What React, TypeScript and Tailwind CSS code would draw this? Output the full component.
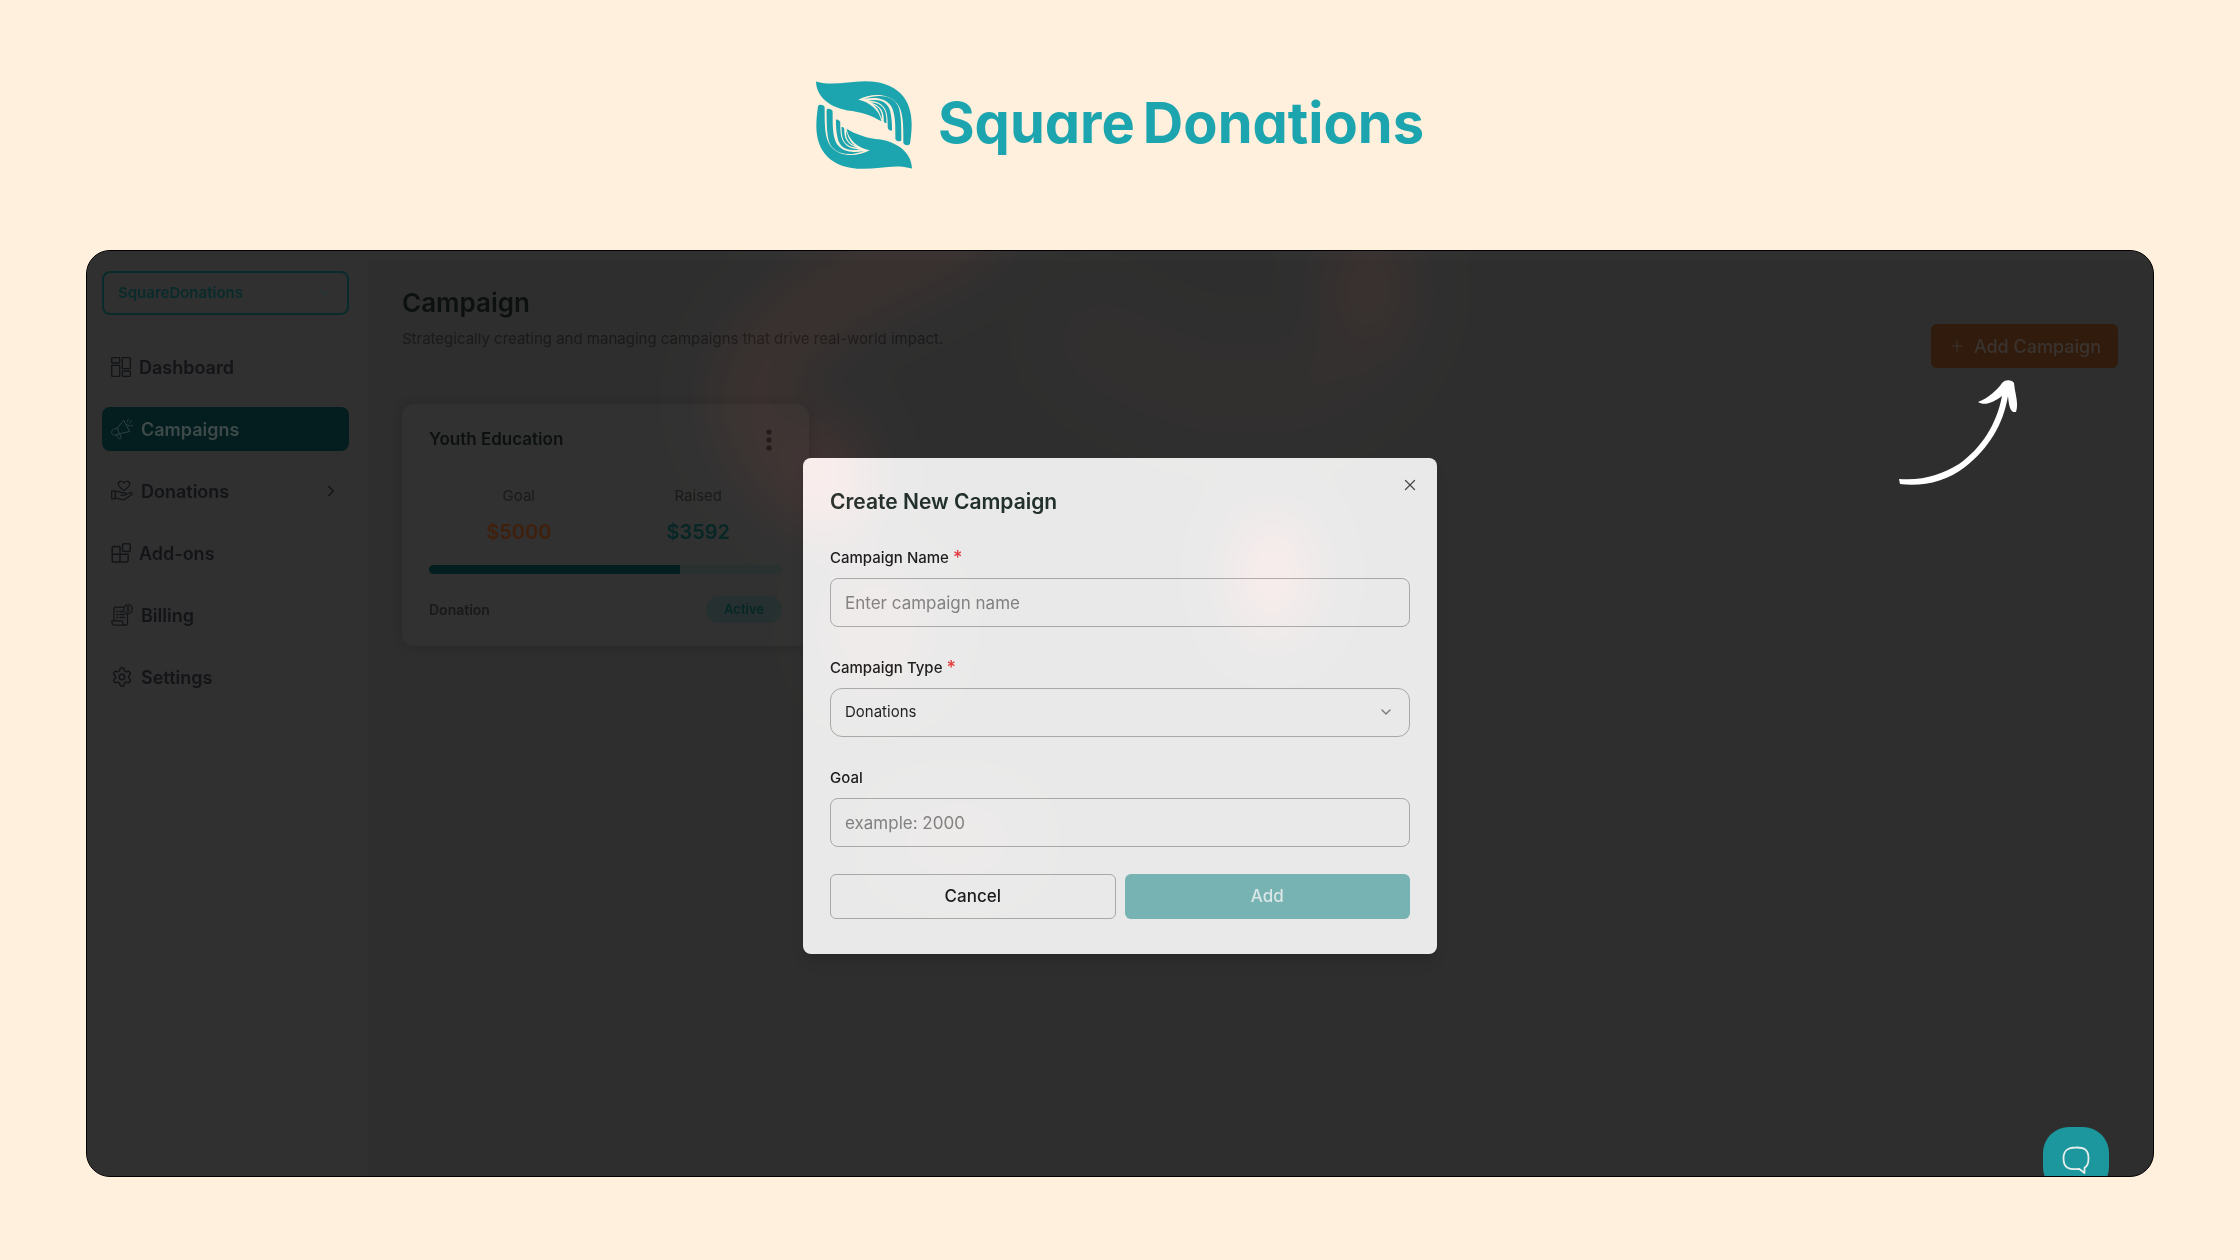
import type { ReactNode } from "react";
import { ChevronDown, ChevronRight, Plus, Settings, X } from "lucide-react";

type NavItem = {
  label: string;
  icon: ReactNode;
  active?: boolean;
  expandable?: boolean;
};

const DashboardIcon = () => (
  <svg viewBox="0 0 20 20" className="w-5 h-5" fill="none" stroke="currentColor" strokeWidth="1.3">
    <rect x="0.7" y="0.7" width="8" height="5.3" rx="0.6" />
    <rect x="11.3" y="0.7" width="8" height="11" rx="0.6" />
    <rect x="0.7" y="8.3" width="8" height="11" rx="0.6" />
    <rect x="11.3" y="14" width="8" height="5.3" rx="0.6" />
  </svg>
);

const MegaphoneIcon = () => (
  <svg viewBox="0 0 22 22" className="w-[22px] h-[22px] text-[#2f4040]" fill="none" stroke="currentColor" strokeWidth="1" strokeLinejoin="round" strokeLinecap="round">
    <path d="M6.6 9.8 12.8 2.2 18.6 13.6 8.6 15.6Z" />
    <path d="M6.6 9.8 2.4 11.6C.6 12.5.2 14.2 1 15.6c.8 1.5 2.4 2 4 1.3L8.6 15.6" />
    <path d="M5.4 17 8 20.6c.7.9 2.5 0 2.1-1.2L8.8 16" />
    <path d="M15.8 6.2c1.6-.4 2.7 1.9 1.4 3" />
    <path d="M16.5 3.5 17.2 1.2M18.6 4.8 20.6 3M19.4 7.6 21.5 7.8" />
  </svg>
);

const HandHeartIcon = () => (
  <svg viewBox="0 0 22 22" className="w-[22px] h-[22px]" fill="none" stroke="currentColor" strokeWidth="1.2" strokeLinejoin="round" strokeLinecap="round">
    <path d="M13 10.6C9.5 8 7.3 6 7.3 3.9 7.3 1 11.3.2 13 3c1.7-2.8 5.7-2 5.7.9 0 2.1-2.2 4.1-5.7 6.7Z" />
    <path d="M.7 10.8h3.5v8H.7Z" />
    <path d="M4.2 12c2.5-1.3 4.3-.8 6 .6h3.3c1.8 0 1.8 2.5 0 2.5H9.8M15 14.3l4.6-1.6c1.5-.4 2.2 1.2 1 2l-6.4 4.3c-1.2.8-2.7.9-4 .5l-4-1.4H4.2" />
  </svg>
);

const AddonsIcon = () => (
  <svg viewBox="0 0 20 20" className="w-5 h-5" fill="none" stroke="currentColor" strokeWidth="1.5" strokeLinejoin="round">
    <path d="M9 3.5H3A1.8 1.8 0 0 0 1.2 5.3v12A1.8 1.8 0 0 0 3 19.1h12.3a1.8 1.8 0 0 0 1.8-1.8v-6H1.2M9 3.5V19" />
    <rect x="11.5" y="0.8" width="7.8" height="7.8" rx="1.6" />
  </svg>
);

const BillingIcon = () => (
  <svg viewBox="0 0 22 22" className="w-[22px] h-[22px]" fill="none" stroke="currentColor" strokeWidth="1.2" strokeLinejoin="round" strokeLinecap="round">
    <path d="M3 16.5V5c0-1 .6-1.8 1.6-1.8h7.6M16.5 10.5v8.3c0 1.4-.8 2.3-2 2.3H3c-1.4 0-2.2-1.6-2.2-4.3h10.6c0 2.5.8 4.2 2.5 4.2" />
    <circle cx="17" cy="5.3" r="4.4" />
    <path d="M18.3 3.9c-.6-1-2.5-.9-2.5.3 0 1.3 2.6.8 2.6 2.2 0 1.3-2 1.4-2.7.3M17 2.4v5.8" strokeWidth="0.9" />
    <path d="M6 7.5h.7M6 10.5h.7M6 13.5h.7M9 7.5h2.5M9 10.5h4.5M9 13.5h4.5" strokeWidth="1.5" />
  </svg>
);

const navItems: NavItem[] = [
  { label: "Dashboard", icon: <DashboardIcon /> },
  { label: "Campaigns", icon: <MegaphoneIcon />, active: true },
  { label: "Donations", icon: <HandHeartIcon />, expandable: true },
  { label: "Add-ons", icon: <AddonsIcon /> },
  { label: "Billing", icon: <BillingIcon /> },
  { label: "Settings", icon: <Settings className="w-[22px] h-[22px]" strokeWidth={1.6} /> },
];

// One hand of the logo, the other is the same shape turned around
const Hand = () => (
  <>
    <path d="M45 37C95 52 140 36 192 36C290 36 333 90 333 165C333 190 330 210 328 224C326 231 312 230 308 222C308 165 308 128 290 104C262 70 210 72 172 92C205 98 236 122 242 157C215 140 180 128 140 124C75 112 46 75 45 37Z" />
    <path d="M188 90C245 70 284 84 295 118C302 145 302 180 302 213C300 220 287 218 284 210C284 165 284 135 272 112C256 88 226 82 188 90Z" />
    <path d="M202 95C240 86 262 102 268 125C273 145 274 165 274 184C270 187 262 182 261 176C261 150 260 132 252 118C240 100 226 96 202 95Z" />
    <path d="M210 100C236 100 250 114 254 130C257 142 257 152 257 162C254 163 250 161 249 157C249 142 248 132 242 122C234 110 224 104 210 100Z" />
    <path d="M216 106C232 112 240 122 243 136L243 150C236 128 230 114 216 106Z" />
  </>
);

const Logo = () => (
  <div className="flex items-center justify-center gap-[26px] text-[#1ca5ae]">
    <svg viewBox="45 35 289 266" className="w-24 h-[90px]" fill="currentColor" aria-hidden="true">
      <Hand />
      <g transform="rotate(180 189.5 168)">
        <Hand />
      </g>
    </svg>
    <p className="flex gap-2 pb-1 text-[56px] leading-none font-bold [font-feature-settings:'cv11']">
      <span>Square</span>
      <span>Donations</span>
    </p>
  </div>
);

const Sidebar = () => (
  <aside className="w-[281px] shrink-0 bg-[#303030] pl-[15px] pr-[19px] pt-5">
    <div className="relative">
      <select
        aria-label="Organization"
        className="w-full h-11 appearance-none rounded-lg border-2 border-[#0a2b2b] bg-transparent px-[14px] text-[15px] font-semibold text-[#0a2b2b]"
      >
        <option>SquareDonations</option>
      </select>
      <ChevronDown className="pointer-events-none absolute right-4 top-3.5 w-4 h-4 text-[#15393a]" strokeWidth={1.5} />
    </div>
    <nav className="mt-[30px] flex flex-col gap-[18px]">
      {navItems.map((item) => (
        <a
          key={item.label}
          href="#"
          className={`flex h-11 items-center gap-2 rounded-lg px-[9px] text-[18px] font-semibold ${
            item.active ? "bg-[#041e1f] text-[#3e4a49]" : "text-[#131417]"
          }`}
        >
          {item.icon}
          <span>{item.label}</span>
          {item.expandable && <ChevronRight className="ml-auto w-[18px] h-[18px]" />}
        </a>
      ))}
    </nav>
  </aside>
);

const CampaignCard = () => (
  <article className="w-[407px] rounded-xl bg-[#313131] px-[27px] pt-[22px] pb-[23px] shadow-[0_0_12px_rgba(0,0,0,0.15)]">
    <div className="flex h-7 items-center justify-between">
      <h2 className="text-[17px] font-semibold text-[#0c1110]">Youth Education</h2>
      <button aria-label="Campaign options" className="px-2.5 text-[#171717]">
        <svg viewBox="0 0 6 24" className="w-1.5 h-6" fill="currentColor">
          <circle cx="3" cy="4" r="2.6" />
          <circle cx="3" cy="12" r="2.6" />
          <circle cx="3" cy="20" r="2.6" />
        </svg>
      </button>
    </div>
    <div className="mt-[30px] grid grid-cols-2 gap-3 pl-1.5 text-center">
      <div>
        <p className="text-[15px] leading-6 text-[#1a1a1a]">Goal</p>
        <p className="mt-2.5 text-xl leading-7 font-semibold text-[#40200d]">$5000</p>
      </div>
      <div>
        <p className="text-[15px] leading-6 text-[#1a1a1a]">Raised</p>
        <p className="mt-2.5 text-xl leading-7 font-semibold text-[#062626]">$3592</p>
      </div>
    </div>
    <div className="mt-[19px] h-[9px] overflow-hidden rounded-full bg-[#283030]">
      <div className="h-full bg-[#041e1f]" style={{ width: "71%" }} />
    </div>
    <div className="mt-[22px] flex items-center justify-between">
      <span className="text-sm font-semibold text-[#191919]">Donation</span>
      <span className="rounded-full bg-[#263030] px-[18px] text-[13px] leading-[27px] font-semibold text-[#062626]">Active</span>
    </div>
  </article>
);

const labelClass = "flex gap-1 leading-6 text-[15px] font-medium text-[#1c1c1c]";
const fieldClass = "mt-2 block w-full h-[49px] border border-[#a8a8a8] bg-transparent px-[14px] text-[#1f1f1f]";

const Required = () => <span className="text-[18px] text-[#e5383b]">*</span>;

const CreateCampaignModal = () => (
  <div className="absolute inset-0 flex items-center justify-center pb-[15px]">
    <form
      role="dialog"
      aria-labelledby="modal-title"
      onSubmit={(e) => e.preventDefault()}
      className="relative w-[634px] rounded-lg bg-[#e9e9e9] px-[27px] pt-7 pb-[35px] shadow-lg"
    >
      <button type="button" aria-label="Close" className="absolute right-[18px] top-[18px] text-[#4a4a4a]">
        <X className="w-[18px] h-[18px]" strokeWidth={1.7} />
      </button>
      <h2 id="modal-title" className="text-[21px] leading-8 font-semibold text-[#22302c]">
        Create New Campaign
      </h2>

      <div className="mt-7 flex flex-col gap-[29px]">
        <div>
          <label htmlFor="name" className={labelClass}>
            Campaign Name <Required />
          </label>
          <input id="name" placeholder="Enter campaign name" className={`${fieldClass} rounded-lg text-[17px] placeholder:text-[#808080]`} />
        </div>

        <div>
          <label htmlFor="type" className={labelClass}>
            Campaign Type <Required />
          </label>
          <div className="relative">
            <select id="type" className={`${fieldClass} appearance-none rounded-xl text-[15px]`}>
              <option>Donations</option>
            </select>
            <ChevronDown className="pointer-events-none absolute right-4 top-4 w-4 h-4 text-[#777]" />
          </div>
        </div>

        <div>
          <label htmlFor="goal" className={labelClass}>
            Goal
          </label>
          <input id="goal" placeholder="example: 2000" className={`${fieldClass} rounded-lg text-[17px] placeholder:text-[#808080]`} />
        </div>
      </div>

      <div className="mt-[27px] grid grid-cols-2 gap-[9px] text-[17px] font-medium">
        <button type="button" className="h-[45px] rounded-md border border-[#a8a8a8] text-[#1a1a1a]">
          Cancel
        </button>
        <button type="submit" className="h-[45px] rounded-md bg-[#77b3b3] text-[#dbe6e6]">
          Add
        </button>
      </div>
    </form>
  </div>
);

// Soft red light over the page and the modal
const Glow = () => (
  <svg
    viewBox="0 0 2067 927"
    preserveAspectRatio="xMidYMid slice"
    className="pointer-events-none absolute inset-0 w-full h-full opacity-[0.07] mix-blend-plus-lighter"
    aria-hidden="true"
  >
    <defs>
      <filter id="soft" x="-50%" y="-50%" width="200%" height="200%" colorInterpolationFilters="sRGB">
        <feGaussianBlur stdDeviation="28" />
      </filter>
    </defs>
    <g filter="url(#soft)" fill="none" strokeLinecap="round">
      <path d="M880 -20C750 40 670 80 665 150C670 200 700 220 725 240" stroke="#c03018" strokeWidth="70" />
      <ellipse cx="740" cy="225" rx="38" ry="60" fill="#ff3828" />
      <path d="M1290 20C1300 90 1260 130 1190 140C1120 150 1060 120 1010 90" stroke="#401406" strokeWidth="80" />
      <ellipse cx="1280" cy="35" rx="38" ry="60" fill="#b02810" />
      <ellipse cx="1186" cy="325" rx="34" ry="60" fill="#ff3828" />
      <ellipse cx="790" cy="380" rx="50" ry="60" fill="#602010" />
      <ellipse cx="870" cy="590" rx="60" ry="30" fill="#50180c" />
    </g>
  </svg>
);

const App = () => {
  return (
    <div className="flex min-h-screen flex-col bg-[#fef0dc] px-[86px] pt-20 pb-[83px] font-['Inter',sans-serif]">
      <Logo />

      <div className="relative mt-20 flex flex-1 overflow-hidden rounded-3xl border border-black bg-[#2e2e2e]">
        <Sidebar />

        <main className="flex-1 border-t-[10px] border-[#303030] pl-[34px] pr-[35px] pt-6">
          <div className="flex items-end justify-between">
            <div className="pb-[17px]">
              <h1 className="text-[26px] leading-9 font-semibold text-[#0c1110]">Campaign</h1>
              <p className="mt-1.5 text-[15px] leading-6 text-[#1a1a1a]">
                Strategically creating and managing campaigns that drive real-world impact.
              </p>
            </div>
            <button className="flex h-11 items-center gap-2 rounded-md bg-[#311b0c] px-[17px] text-[18px] font-medium text-[#3a3430]">
              <Plus className="w-[18px] h-[18px]" strokeWidth={1.5} />
              Add Campaign
            </button>
          </div>
          <div className="mt-9">
            <CampaignCard />
          </div>
        </main>

        {/* Pointer to the add button */}
        <svg viewBox="0 0 120 106" className="absolute right-[134px] top-[129px] w-[120px] h-[106px]" fill="#fff" aria-hidden="true">
          <path d="M0 99C25 101 43 94 60 84C83 68 98 43 103 16C94 23 85 26 79 22C90 18 99 9 103 3C107-1 113 0 115 3C116 14 120 23 117 32C112 33 110 28 109 16C104 45 90 68 66 87C47 102 22 107 1 104Z" />
        </svg>

        <CreateCampaignModal />
        <Glow />

        <button aria-label="Open chat" className="absolute right-11 -bottom-[17px] flex h-[66px] w-[66px] justify-center rounded-[26px] bg-[#1c979e] pt-[19px]">
          <svg viewBox="0 0 28 28" className="w-7 h-7" fill="none" stroke="#e6eeee" strokeWidth="1.8" strokeLinejoin="round">
            <path d="M14 1.5C22 1.3 26.5 3.5 26.5 12.5C26.5 17.5 25 20.5 22.5 21.8V27L17 22.8C7 24 1.5 22 1.5 12.5C1.5 4 6 1.5 14 1.5Z" />
          </svg>
        </button>
      </div>
    </div>
  );
};

export default App;
